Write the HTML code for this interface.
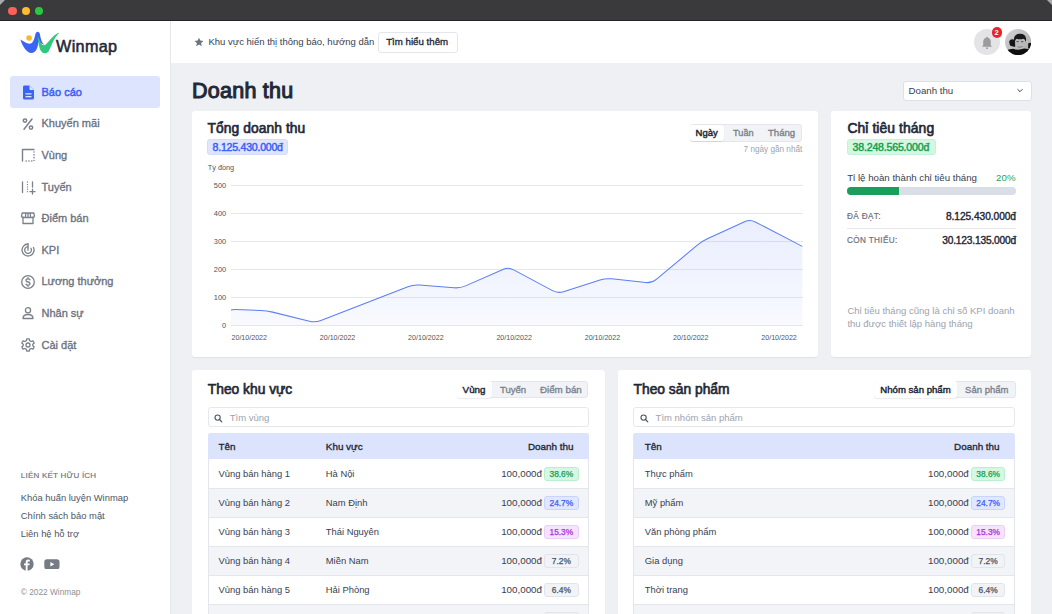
<!DOCTYPE html>
<html><head><meta charset="utf-8"><style>
html,body{margin:0;padding:0;}
body{width:1052px;height:614px;overflow:hidden;position:relative;font-family:'Liberation Sans', sans-serif;background:#fff;}
</style></head><body>
<div style="position:absolute;left:0px;top:0px;width:1052px;height:20px;background:#3a3a3c"></div>
<div style="position:absolute;left:0px;top:20px;width:1052px;height:1px;background:#242426"></div>
<svg style="position:absolute;left:0;top:0" width="1052" height="20"><path d="M0 0 L5 0 L0 5Z" fill="#a9a9ab"/><path d="M1052 0 L1047 0 L1052 5Z" fill="#a9a9ab"/></svg>
<div style="position:absolute;left:8.35px;top:6.949999999999999px;width:8.3px;height:8.3px;background:#fe5f57;border-radius:50%"></div>
<div style="position:absolute;left:21.65px;top:6.949999999999999px;width:8.3px;height:8.3px;background:#febc2e;border-radius:50%"></div>
<div style="position:absolute;left:34.75px;top:6.949999999999999px;width:8.3px;height:8.3px;background:#28c840;border-radius:50%"></div>
<div style="position:absolute;left:0px;top:21px;width:170px;height:593px;background:#fff"></div>
<div style="position:absolute;left:170px;top:21px;width:1px;height:593px;background:#e5e7eb"></div>
<svg style="position:absolute;left:17px;top:28px" width="45" height="28" viewBox="0 0 45 28">
<path d="M3.4 11.4 C7 13.8 11 16 13.5 15.6 C16.3 15 17.5 10.5 18.3 6.5 C19 3 22.3 2.5 23 6.5 C23.8 11 25 16 28.5 17.5 L21.5 14 C20.8 20 19 24.8 14.5 25 C9.5 25 5 17 3.4 11.4Z" fill="#3d63f5"/>
<path d="M20.6 8.5 C21.5 15 22 21 24.8 24 C26.5 25.8 30 25.8 31.5 23.5 C34 19.5 36 11 42.2 4.8 C41.8 4.6 41 4.8 40.5 5.2 C36 7.8 32 13 28.8 16.5 C26.5 18.5 24 16.5 23 13Z" fill="#2ec97a"/>
<circle cx="12.1" cy="10" r="2.8" fill="#f9b72b"/>
</svg>
<div style="position:absolute;left:56.00px;top:38.09px;font-size:16.2px;line-height:16.2px;font-weight:400;color:#1f2937;letter-spacing:0.35px;white-space:nowrap;-webkit-text-stroke:0.33px #1f2937;-webkit-text-stroke:0.55px #1f2937;">Winmap</div>
<div style="position:absolute;left:10px;top:76px;width:150px;height:31.8px;background:#dde4fd;border-radius:3px"></div>
<div style="position:absolute;left:41.50px;top:86.89px;font-size:11px;line-height:11px;font-weight:400;color:#3b5ef6;letter-spacing:0px;white-space:nowrap;-webkit-text-stroke:0.33px #3b5ef6;-webkit-text-stroke:0.45px #3b5ef6;">Báo cáo</div>
<div style="position:absolute;left:41.50px;top:118.49px;font-size:11px;line-height:11px;font-weight:400;color:#6b7280;letter-spacing:0px;white-space:nowrap;-webkit-text-stroke:0.33px #6b7280;">Khuyến mãi</div>
<div style="position:absolute;left:41.50px;top:150.09px;font-size:11px;line-height:11px;font-weight:400;color:#6b7280;letter-spacing:0px;white-space:nowrap;-webkit-text-stroke:0.33px #6b7280;">Vùng</div>
<div style="position:absolute;left:41.50px;top:181.69px;font-size:11px;line-height:11px;font-weight:400;color:#6b7280;letter-spacing:0px;white-space:nowrap;-webkit-text-stroke:0.33px #6b7280;">Tuyến</div>
<div style="position:absolute;left:41.50px;top:213.29px;font-size:11px;line-height:11px;font-weight:400;color:#6b7280;letter-spacing:0px;white-space:nowrap;-webkit-text-stroke:0.33px #6b7280;">Điểm bán</div>
<div style="position:absolute;left:41.50px;top:244.89px;font-size:11px;line-height:11px;font-weight:400;color:#6b7280;letter-spacing:0px;white-space:nowrap;-webkit-text-stroke:0.33px #6b7280;">KPI</div>
<div style="position:absolute;left:41.50px;top:276.49px;font-size:11px;line-height:11px;font-weight:400;color:#6b7280;letter-spacing:0px;white-space:nowrap;-webkit-text-stroke:0.33px #6b7280;">Lương thưởng</div>
<div style="position:absolute;left:41.50px;top:308.09px;font-size:11px;line-height:11px;font-weight:400;color:#6b7280;letter-spacing:0px;white-space:nowrap;-webkit-text-stroke:0.33px #6b7280;">Nhân sự</div>
<div style="position:absolute;left:41.50px;top:339.69px;font-size:11px;line-height:11px;font-weight:400;color:#6b7280;letter-spacing:0px;white-space:nowrap;-webkit-text-stroke:0.33px #6b7280;">Cài đặt</div>
<svg style="position:absolute;left:22px;top:85px" width="13" height="15" viewBox="0 0 13 15">
<path d="M2 0.5 H7.5 L12 5 V13 Q12 14.5 10.5 14.5 H2.5 Q1 14.5 1 13 V2 Q1 0.5 2 0.5Z" fill="#3d63f5"/>
<path d="M7.5 0.5 V4 Q7.5 5 8.5 5 H12Z" fill="#dde4fd"/>
<rect x="3.5" y="8.2" width="6" height="1.3" fill="#dde4fd"/><rect x="3.5" y="11" width="6" height="1.3" fill="#dde4fd"/>
</svg>
<svg style="position:absolute;left:20px;top:116px" width="16" height="16" viewBox="0 0 16 16" fill="none" stroke="#7b808a" stroke-width="1.3" stroke-linecap="round" stroke-linejoin="round"><path d="M4 13.2 L12 3" stroke-width="1.5"/><circle cx="5" cy="4.6" r="1.7" stroke-width="1.5"/><circle cx="11" cy="11.6" r="1.7" stroke-width="1.5"/></svg>
<svg style="position:absolute;left:20px;top:147px" width="16" height="16" viewBox="0 0 16 16" fill="none" stroke="#7b808a" stroke-width="1.3" stroke-linecap="round" stroke-linejoin="round"><path d="M2.5 14 V2.5 H14" stroke-width="1.4"/><path d="M14 5 V14 H4.5" stroke-dasharray="0.1 2.7" stroke-width="1.5"/></svg>
<svg style="position:absolute;left:20px;top:179px" width="16" height="16" viewBox="0 0 16 16" fill="none" stroke="#7b808a" stroke-width="1.3" stroke-linecap="round" stroke-linejoin="round"><path d="M2.5 3 V13.5"/><path d="M7.5 3 V13.5" stroke-dasharray="0.1 2.3"/><path d="M12.5 3 V8"/><path d="M10 12.6 H15 M12.5 10.2 V15"/></svg>
<svg style="position:absolute;left:20px;top:210px" width="16" height="16" viewBox="0 0 16 16" fill="none" stroke="#7b808a" stroke-width="1.3" stroke-linecap="round" stroke-linejoin="round"><path d="M3 7 V13.5 H13 V7"/><path d="M2.2 3 H13.8 L14.5 6 Q14.5 7.5 13 7.5 H3 Q1.5 7.5 1.5 6Z M5.8 3 L5.4 7.5 M10.2 3 L10.6 7.5 M8 3 V7.5"/></svg>
<svg style="position:absolute;left:20px;top:242px" width="16" height="16" viewBox="0 0 16 16" fill="none" stroke="#7b808a" stroke-width="1.3" stroke-linecap="round" stroke-linejoin="round"><path d="M8 2 A6 6 0 1 0 13.5 5.5"/><path d="M8 4.6 A3.4 3.4 0 1 0 11 6.3"/><path d="M8 2 V8.3"/></svg>
<svg style="position:absolute;left:20px;top:274px" width="16" height="16" viewBox="0 0 16 16" fill="none" stroke="#7b808a" stroke-width="1.3" stroke-linecap="round" stroke-linejoin="round"><circle cx="8" cy="8" r="6.3"/><path d="M10 5.8 Q9.4 4.8 8 4.8 Q6 4.8 6 6.4 Q6 7.6 8 8 Q10 8.4 10 9.7 Q10 11.2 8 11.2 Q6.6 11.2 6 10.2 M8 3.6 V4.8 M8 11.2 V12.4"/></svg>
<svg style="position:absolute;left:20px;top:305px" width="16" height="16" viewBox="0 0 16 16" fill="none" stroke="#7b808a" stroke-width="1.3" stroke-linecap="round" stroke-linejoin="round"><circle cx="8" cy="5.2" r="2.6"/><path d="M3 13.5 Q3 9.5 8 9.5 Q13 9.5 13 13.5 Z"/></svg>
<svg style="position:absolute;left:20px;top:337px" width="16" height="16" viewBox="0 0 16 16" fill="none" stroke="#7b808a" stroke-width="1.3" stroke-linecap="round" stroke-linejoin="round"><circle cx="8" cy="8" r="2"/><path d="M6.8 1.8 H9.2 L9.6 3.6 L11.2 4.5 L13 3.9 L14.2 6 L12.8 7.2 V8.8 L14.2 10 L13 12.1 L11.2 11.5 L9.6 12.4 L9.2 14.2 H6.8 L6.4 12.4 L4.8 11.5 L3 12.1 L1.8 10 L3.2 8.8 V7.2 L1.8 6 L3 3.9 L4.8 4.5 L6.4 3.6Z"/></svg>
<div style="position:absolute;left:20.80px;top:471.93px;font-size:8px;line-height:8px;font-weight:400;color:#6b7280;letter-spacing:0.22px;white-space:nowrap;-webkit-text-stroke:0.15px #6b7280;">LIÊN KẾT HỮU ÍCH</div>
<div style="position:absolute;left:20.80px;top:492.84px;font-size:9.4px;line-height:9.4px;font-weight:400;color:#4b5563;letter-spacing:0px;white-space:nowrap;">Khóa huấn luyện Winmap</div>
<div style="position:absolute;left:20.80px;top:511.09px;font-size:9.4px;line-height:9.4px;font-weight:400;color:#4b5563;letter-spacing:0px;white-space:nowrap;">Chính sách bảo mật</div>
<div style="position:absolute;left:20.80px;top:529.34px;font-size:9.4px;line-height:9.4px;font-weight:400;color:#4b5563;letter-spacing:0px;white-space:nowrap;">Liên hệ hỗ trợ</div>
<svg style="position:absolute;left:20px;top:557px" width="14" height="14" viewBox="0 0 14 14"><circle cx="7" cy="7" r="6.7" fill="#777b86"/><path d="M7.6 14 V8.3 H9.4 L9.7 6.4 H7.6 V5.3 Q7.6 4.4 8.5 4.4 H9.8 V2.7 Q9 2.6 8.2 2.6 Q5.7 2.6 5.7 5.2 V6.4 H4 V8.3 H5.7 V14Z" fill="#fff"/></svg>
<svg style="position:absolute;left:43.5px;top:558.8px" width="16" height="10.5" viewBox="0 0 16 10.5"><rect x="0.3" y="0.2" width="15.2" height="10.1" rx="2.6" fill="#777b86"/><path d="M6.4 3.1 L10.3 5.25 L6.4 7.4Z" fill="#fff"/></svg>
<div style="position:absolute;left:20.80px;top:587.77px;font-size:8.3px;line-height:8.3px;font-weight:400;color:#8b909a;letter-spacing:0px;white-space:nowrap;">© 2022 Winmap</div>
<div style="position:absolute;left:171px;top:21px;width:881px;height:42px;background:#fff"></div>
<svg style="position:absolute;left:194px;top:37px" width="10" height="10" viewBox="0 0 24 24"><path d="M12 1.5 L15.1 8.6 L22.8 9.3 L17 14.4 L18.7 22 L12 18 L5.3 22 L7 14.4 L1.2 9.3 L8.9 8.6Z" fill="#6b7280"/></svg>
<div style="position:absolute;left:208.50px;top:37.46px;font-size:9.5px;line-height:9.5px;font-weight:400;color:#374151;letter-spacing:0px;white-space:nowrap;">Khu vực hiển thị thông báo, hướng dẫn</div>
<div style="position:absolute;left:378px;top:31.5px;width:77.5px;height:19.7px;background:#fff;border:1px solid #e3e6ec;border-radius:3px"></div>
<div style="position:absolute;left:386.20px;top:37.29px;font-size:9.7px;line-height:9.7px;font-weight:400;color:#1f2937;letter-spacing:0px;white-space:nowrap;-webkit-text-stroke:0.33px #1f2937;">Tìm hiểu thêm</div>
<div style="position:absolute;left:974px;top:29px;width:26px;height:26px;background:#e4e4e6;border-radius:50%"></div>
<svg style="position:absolute;left:981px;top:35.5px" width="12" height="14" viewBox="0 0 12 14"><path d="M6 0.8 Q6.9 0.8 6.9 1.7 Q9.8 2.4 9.8 6 V9.3 L11 10.8 H1 L2.2 9.3 V6 Q2.2 2.4 5.1 1.7 Q5.1 0.8 6 0.8Z" fill="#9b9b9e"/><path d="M4.8 11.5 H7.2 Q7.2 13 6 13 Q4.8 13 4.8 11.5Z" fill="#9b9b9e"/></svg>
<div style="position:absolute;left:991.6px;top:26.9px;width:10.8px;height:10.8px;background:#e5252a;border-radius:50%"></div>
<div style="position:absolute;left:994.60px;top:28.85px;font-size:7.5px;line-height:7.5px;font-weight:700;color:#fff;letter-spacing:0px;white-space:nowrap;">2</div>
<svg style="position:absolute;left:1005.3px;top:29px" width="26.2" height="26.2" viewBox="0 0 26 26"><defs><clipPath id="av"><circle cx="13" cy="13" r="13"/></clipPath><linearGradient id="ag" x1="0" y1="0" x2="1" y2="1"><stop offset="0" stop-color="#d4d4d6"/><stop offset="1" stop-color="#a8a8aa"/></linearGradient></defs>
<g clip-path="url(#av)"><rect width="26" height="26" fill="url(#ag)"/>
<path d="M4.3 12 Q5 10.2 7.5 10.3 Q10 10.5 10.3 13 L10.3 17.5 Q7 17.8 5 16.5 Q4 14.5 4.3 12Z" fill="#141414"/>
<path d="M23 14.5 Q25 13 26 14 L26 19.5 Q24 20 23 19Z" fill="#141414"/>
<path d="M10 9.5 Q10 8.8 11.5 8.8 L18.5 8.8 Q20 9 20 11 L19.8 16.5 Q19 20.5 15 20.6 Q11 20.5 10.3 16.5Z" fill="#b9b9bb"/>
<path d="M8.8 11.5 Q8.5 5 14.5 4.7 Q20.5 4.6 21 10 Q21 12 20.4 12.6 Q20 9.8 18 9.7 Q15 10.8 11.5 9.6 Q10.2 10.5 10 12.2Z" fill="#1a1a1c"/>
<path d="M11.5 12.5 H13.5 M16 12.6 H18.2" stroke="#3a3a3a" stroke-width="0.9"/>
<path d="M12.5 17.5 Q15 18.6 17.5 17.3" stroke="#7a7a7a" stroke-width="1" fill="none"/>
<path d="M0 22 Q3 19.8 8 19.6 Q13 21.6 19 19.4 Q24 19.6 26 21.5 V26 H0Z" fill="#0e0e0e"/>
</g></svg>
<div style="position:absolute;left:171px;top:63px;width:881px;height:551px;background:#eef0f4"></div>
<div style="position:absolute;left:192.00px;top:81.30px;font-size:21.5px;line-height:21.5px;font-weight:400;color:#1f2937;letter-spacing:0.25px;white-space:nowrap;-webkit-text-stroke:0.33px #1f2937;-webkit-text-stroke:1.05px #1f2937;">Doanh thu</div>
<div style="position:absolute;left:902.5px;top:80.5px;width:129px;height:20.7px;background:#fff;border:1px solid #dde0e7;border-radius:3px;box-sizing:border-box"></div>
<div style="position:absolute;left:908.50px;top:86.39px;font-size:9.7px;line-height:9.7px;font-weight:400;color:#374151;letter-spacing:0px;white-space:nowrap;">Doanh thu</div>
<svg style="position:absolute;left:1016px;top:88px" width="8" height="6" viewBox="0 0 8 6"><path d="M1.8 1.5 L4 3.7 L6.2 1.5" stroke="#374151" stroke-width="1" fill="none" stroke-linecap="round"/></svg>
<div style="position:absolute;left:192px;top:110.5px;width:626px;height:246.5px;background:#fff;border-radius:3px;box-shadow:0 1px 1px rgba(0,0,0,0.06)"></div>
<div style="position:absolute;left:207.60px;top:122.42px;font-size:13.8px;line-height:13.8px;font-weight:400;color:#1f2937;letter-spacing:0.08px;white-space:nowrap;-webkit-text-stroke:0.33px #1f2937;-webkit-text-stroke:0.65px #1f2937;">Tổng doanh thu</div>
<div style="position:absolute;left:207.2px;top:139.3px;width:81.3px;height:16.2px;background:#dfe5fd;border-radius:3px;box-sizing:border-box;border:1px solid #d3dcfc"></div>
<div style="position:absolute;left:212.60px;top:142.23px;font-size:10.6px;line-height:10.6px;font-weight:400;color:#3b5ef6;letter-spacing:-0.25px;white-space:nowrap;-webkit-text-stroke:0.33px #3b5ef6;-webkit-text-stroke:0.45px #3b5ef6;">8.125.430.000đ</div>
<div style="position:absolute;left:207.80px;top:164.42px;font-size:7.3px;line-height:7.3px;font-weight:400;color:#4b5563;letter-spacing:0px;white-space:nowrap;">Tỷ đồng</div>
<div style="position:absolute;left:689.6px;top:124px;width:112.79999999999995px;height:17.5px;background:#f1f3f6;border:1px solid #e3e6ec;border-radius:3px;box-sizing:border-box"></div>
<div style="position:absolute;left:690.1px;top:124.5px;width:34.19999999999993px;height:16.5px;background:#fff;border-radius:3px;box-shadow:0 1px 1px rgba(0,0,0,0.08)"></div>
<div style="position:absolute;left:695.60px;top:128.26px;font-size:9.5px;line-height:9.5px;font-weight:400;color:#1f2937;letter-spacing:0px;white-space:nowrap;-webkit-text-stroke:0.33px #1f2937;-webkit-text-stroke:0.45px #1f2937;">Ngày</div>
<div style="position:absolute;left:733.00px;top:128.51px;font-size:9.2px;line-height:9.2px;font-weight:400;color:#7c818b;letter-spacing:0px;white-space:nowrap;-webkit-text-stroke:0.33px #7c818b;">Tuần</div>
<div style="position:absolute;left:768.00px;top:128.17px;font-size:9.6px;line-height:9.6px;font-weight:400;color:#7c818b;letter-spacing:0px;white-space:nowrap;-webkit-text-stroke:0.33px #7c818b;">Tháng</div>
<div style="position:absolute;right:249.70px;top:145.86px;font-size:8.2px;line-height:8.2px;font-weight:400;color:#9ca3af;letter-spacing:0px;white-space:nowrap;">7 ngày gần nhất</div>
<div style="position:absolute;left:231px;top:184.6px;width:571.5px;height:1px;background:#e6e8ef"></div>
<div style="position:absolute;right:825.80px;top:181.54px;font-size:7.4px;line-height:7.4px;font-weight:400;color:#4b5563;letter-spacing:0px;white-space:nowrap;">500</div>
<div style="position:absolute;left:231px;top:212.7px;width:571.5px;height:1px;background:#e6e8ef"></div>
<div style="position:absolute;right:825.80px;top:209.64px;font-size:7.4px;line-height:7.4px;font-weight:400;color:#4b5563;letter-spacing:0px;white-space:nowrap;">400</div>
<div style="position:absolute;left:231px;top:240.8px;width:571.5px;height:1px;background:#e6e8ef"></div>
<div style="position:absolute;right:825.80px;top:237.74px;font-size:7.4px;line-height:7.4px;font-weight:400;color:#4b5563;letter-spacing:0px;white-space:nowrap;">300</div>
<div style="position:absolute;left:231px;top:268.9px;width:571.5px;height:1px;background:#e6e8ef"></div>
<div style="position:absolute;right:825.80px;top:265.84px;font-size:7.4px;line-height:7.4px;font-weight:400;color:#4b5563;letter-spacing:0px;white-space:nowrap;">200</div>
<div style="position:absolute;left:231px;top:296.9px;width:571.5px;height:1px;background:#e6e8ef"></div>
<div style="position:absolute;right:825.80px;top:293.84px;font-size:7.4px;line-height:7.4px;font-weight:400;color:#4b5563;letter-spacing:0px;white-space:nowrap;">100</div>
<div style="position:absolute;left:231px;top:325.0px;width:571.5px;height:1px;background:#e6e8ef"></div>
<div style="position:absolute;right:825.80px;top:321.94px;font-size:7.4px;line-height:7.4px;font-weight:400;color:#4b5563;letter-spacing:0px;white-space:nowrap;">0</div>
<div style="position:absolute;left:231.50px;top:334.79px;font-size:7.1px;line-height:7.1px;font-weight:400;color:#4b5563;letter-spacing:0px;white-space:nowrap;">20/10/2022</div>
<div style="position:absolute;left:319.80px;top:334.79px;font-size:7.1px;line-height:7.1px;font-weight:400;color:#4b5563;letter-spacing:0px;white-space:nowrap;">20/10/2022</div>
<div style="position:absolute;left:408.10px;top:334.79px;font-size:7.1px;line-height:7.1px;font-weight:400;color:#4b5563;letter-spacing:0px;white-space:nowrap;">20/10/2022</div>
<div style="position:absolute;left:496.40px;top:334.79px;font-size:7.1px;line-height:7.1px;font-weight:400;color:#4b5563;letter-spacing:0px;white-space:nowrap;">20/10/2022</div>
<div style="position:absolute;left:584.70px;top:334.79px;font-size:7.1px;line-height:7.1px;font-weight:400;color:#4b5563;letter-spacing:0px;white-space:nowrap;">20/10/2022</div>
<div style="position:absolute;left:673.00px;top:334.79px;font-size:7.1px;line-height:7.1px;font-weight:400;color:#4b5563;letter-spacing:0px;white-space:nowrap;">20/10/2022</div>
<div style="position:absolute;left:761.30px;top:334.79px;font-size:7.1px;line-height:7.1px;font-weight:400;color:#4b5563;letter-spacing:0px;white-space:nowrap;">20/10/2022</div>
<svg style="position:absolute;left:0;top:0" width="1052" height="614"><defs><linearGradient id="fg" x1="0" y1="0" x2="0" y2="1"><stop offset="0" stop-color="#5b7cfa" stop-opacity="0.13"/><stop offset="1" stop-color="#5b7cfa" stop-opacity="0.04"/></linearGradient></defs>
<path d="M231 310.1 L232.50 309.75 Q234 309.4 235.54 309.46 L260.80 310.46 Q266.8 310.7 272.63 312.13 L309.47 321.17 Q315.3 322.6 320.90 320.43 L407.90 286.77 Q413.5 284.6 419.48 285.08 L454.02 287.82 Q460 288.3 465.49 285.88 L502.91 269.42 Q508.4 267.0 513.69 269.84 L552.51 290.66 Q557.8 293.5 563.52 291.67 L599.98 280.03 Q605.7 278.2 611.66 278.85 L645.74 282.55 Q651.7 283.2 656.31 279.36 L697.29 245.14 Q701.9 241.3 707.35 238.79 L744.55 221.71 Q750 219.2 755.32 221.97 L802.3 246.4 L802.3 325.5 L231 325.5Z" fill="url(#fg)"/>
<path d="M231 310.1 L232.50 309.75 Q234 309.4 235.54 309.46 L260.80 310.46 Q266.8 310.7 272.63 312.13 L309.47 321.17 Q315.3 322.6 320.90 320.43 L407.90 286.77 Q413.5 284.6 419.48 285.08 L454.02 287.82 Q460 288.3 465.49 285.88 L502.91 269.42 Q508.4 267.0 513.69 269.84 L552.51 290.66 Q557.8 293.5 563.52 291.67 L599.98 280.03 Q605.7 278.2 611.66 278.85 L645.74 282.55 Q651.7 283.2 656.31 279.36 L697.29 245.14 Q701.9 241.3 707.35 238.79 L744.55 221.71 Q750 219.2 755.32 221.97 L802.3 246.4" fill="none" stroke="#5a7ef8" stroke-width="1.05"/></svg>
<div style="position:absolute;left:831px;top:110.5px;width:200px;height:246.5px;background:#fff;border-radius:3px;box-shadow:0 1px 1px rgba(0,0,0,0.06)"></div>
<div style="position:absolute;left:847.40px;top:122.33px;font-size:13.9px;line-height:13.9px;font-weight:400;color:#1f2937;letter-spacing:0.08px;white-space:nowrap;-webkit-text-stroke:0.33px #1f2937;-webkit-text-stroke:0.65px #1f2937;">Chỉ tiêu tháng</div>
<div style="position:absolute;left:847px;top:139.3px;width:89.2px;height:16.2px;background:#d3f8e2;border-radius:3px;box-sizing:border-box;border:1px solid #c2f3d6"></div>
<div style="position:absolute;left:852.60px;top:142.23px;font-size:10.6px;line-height:10.6px;font-weight:400;color:#1b9e55;letter-spacing:-0.2px;white-space:nowrap;-webkit-text-stroke:0.33px #1b9e55;-webkit-text-stroke:0.45px #1b9e55;">38.248.565.000đ</div>
<div style="position:absolute;left:847.20px;top:172.99px;font-size:9.7px;line-height:9.7px;font-weight:400;color:#374151;letter-spacing:0px;white-space:nowrap;">Tỉ lệ hoàn thành chỉ tiêu tháng</div>
<div style="position:absolute;right:36.50px;top:172.99px;font-size:9.7px;line-height:9.7px;font-weight:400;color:#22a55a;letter-spacing:0px;white-space:nowrap;">20%</div>
<div style="position:absolute;left:847.4px;top:187px;width:168.5px;height:8px;background:#dadee7;border-radius:4px"></div>
<div style="position:absolute;left:847.4px;top:187px;width:51.2px;height:8px;background:#1a9e5c;border-radius:4px 0 0 4px"></div>
<div style="position:absolute;left:847.00px;top:213.06px;font-size:8.2px;line-height:8.2px;font-weight:400;color:#6b7280;letter-spacing:0.35px;white-space:nowrap;-webkit-text-stroke:0.2px #6b7280;">ĐÃ ĐẠT:</div>
<div style="position:absolute;right:36.00px;top:212.17px;font-size:10.2px;line-height:10.2px;font-weight:400;color:#1f2937;letter-spacing:-0.05px;white-space:nowrap;-webkit-text-stroke:0.33px #1f2937;-webkit-text-stroke:0.4px #1f2937;">8.125.430.000đ</div>
<div style="position:absolute;left:847px;top:227.5px;width:168.5px;height:1px;background:#e5e7eb"></div>
<div style="position:absolute;left:847.00px;top:236.86px;font-size:8.2px;line-height:8.2px;font-weight:400;color:#6b7280;letter-spacing:0.35px;white-space:nowrap;-webkit-text-stroke:0.2px #6b7280;">CÒN THIẾU:</div>
<div style="position:absolute;right:36.00px;top:235.57px;font-size:10.2px;line-height:10.2px;font-weight:400;color:#1f2937;letter-spacing:-0.18px;white-space:nowrap;-webkit-text-stroke:0.33px #1f2937;-webkit-text-stroke:0.4px #1f2937;">30.123.135.000đ</div>
<div style="position:absolute;left:847.40px;top:306.32px;font-size:9.55px;line-height:9.55px;font-weight:400;color:#9ca3af;letter-spacing:0px;white-space:nowrap;">Chỉ tiêu tháng cũng là chỉ số KPI doanh</div>
<div style="position:absolute;left:847.40px;top:319.22px;font-size:9.55px;line-height:9.55px;font-weight:400;color:#9ca3af;letter-spacing:0px;white-space:nowrap;">thu được thiết lập hàng tháng</div>
<div style="position:absolute;left:192px;top:370px;width:413px;height:260px;background:#fff;border-radius:3px;box-shadow:0 1px 1px rgba(0,0,0,0.06)"></div>
<div style="position:absolute;left:207.80px;top:382.82px;font-size:13.8px;line-height:13.8px;font-weight:400;color:#1f2937;letter-spacing:0px;white-space:nowrap;-webkit-text-stroke:0.33px #1f2937;-webkit-text-stroke:0.65px #1f2937;">Theo khu vực</div>
<div style="position:absolute;left:456.6px;top:380.5px;width:131.89999999999998px;height:17.899999999999977px;background:#f1f3f6;border:1px solid #e3e6ec;border-radius:3px;box-sizing:border-box"></div>
<div style="position:absolute;left:457.1px;top:381.0px;width:34.69999999999999px;height:16.899999999999977px;background:#fff;border-radius:3px;box-shadow:0 1px 1px rgba(0,0,0,0.08)"></div>
<div style="position:absolute;left:462.60px;top:385.00px;font-size:9.8px;line-height:9.8px;font-weight:400;color:#1f2937;letter-spacing:0px;white-space:nowrap;-webkit-text-stroke:0.33px #1f2937;-webkit-text-stroke:0.45px #1f2937;">Vùng</div>
<div style="position:absolute;left:499.90px;top:385.17px;font-size:9.6px;line-height:9.6px;font-weight:400;color:#7c818b;letter-spacing:0px;white-space:nowrap;-webkit-text-stroke:0.33px #7c818b;">Tuyến</div>
<div style="position:absolute;left:539.90px;top:385.00px;font-size:9.8px;line-height:9.8px;font-weight:400;color:#7c818b;letter-spacing:0px;white-space:nowrap;-webkit-text-stroke:0.33px #7c818b;">Điểm bán</div>
<div style="position:absolute;left:207.5px;top:407px;width:381.5px;height:20.4px;background:#fff;border:1px solid #e6e8ed;border-radius:3px;box-sizing:border-box"></div>
<svg style="position:absolute;left:214.0px;top:413.5px" width="9" height="9" viewBox="0 0 9 9"><circle cx="3.6" cy="3.6" r="2.6" stroke="#4b5563" stroke-width="1.1" fill="none"/><path d="M5.5 5.5 L7.8 7.8" stroke="#4b5563" stroke-width="1.2" stroke-linecap="round"/></svg>
<div style="position:absolute;left:229.80px;top:412.76px;font-size:9.5px;line-height:9.5px;font-weight:400;color:#9ca3af;letter-spacing:0px;white-space:nowrap;">Tìm vùng</div>
<div style="position:absolute;left:207.5px;top:433.3px;width:381.5px;height:200px;background:#fff;border:1px solid #e3e6ec;border-radius:3px;box-sizing:border-box"></div>
<div style="position:absolute;left:207.5px;top:433.3px;width:381.5px;height:25.7px;background:#dbe3fd;border-radius:3px 3px 0 0"></div>
<div style="position:absolute;left:218.50px;top:441.52px;font-size:9.9px;line-height:9.9px;font-weight:400;color:#1f2937;letter-spacing:0px;white-space:nowrap;-webkit-text-stroke:0.33px #1f2937;">Tên</div>
<div style="position:absolute;left:325.80px;top:441.52px;font-size:9.9px;line-height:9.9px;font-weight:400;color:#1f2937;letter-spacing:0px;white-space:nowrap;-webkit-text-stroke:0.33px #1f2937;">Khu vực</div>
<div style="position:absolute;right:478.50px;top:441.52px;font-size:9.9px;line-height:9.9px;font-weight:400;color:#1f2937;letter-spacing:0px;white-space:nowrap;-webkit-text-stroke:0.33px #1f2937;">Doanh thu</div>
<div style="position:absolute;left:208.5px;top:459px;width:379.5px;height:29px;background:#fff"></div>
<div style="position:absolute;left:208.5px;top:488px;width:379.5px;height:29px;background:#f3f4f7"></div>
<div style="position:absolute;left:208.5px;top:517px;width:379.5px;height:29px;background:#fff"></div>
<div style="position:absolute;left:208.5px;top:546px;width:379.5px;height:29px;background:#f3f4f7"></div>
<div style="position:absolute;left:208.5px;top:575px;width:379.5px;height:29px;background:#fff"></div>
<div style="position:absolute;left:208.5px;top:604px;width:379.5px;height:29px;background:#f3f4f7"></div>
<div style="position:absolute;left:208.5px;top:487.6px;width:379.5px;height:1px;background:#e4e6ec"></div>
<div style="position:absolute;left:208.5px;top:516.6px;width:379.5px;height:1px;background:#e4e6ec"></div>
<div style="position:absolute;left:208.5px;top:545.6px;width:379.5px;height:1px;background:#e4e6ec"></div>
<div style="position:absolute;left:208.5px;top:574.6px;width:379.5px;height:1px;background:#e4e6ec"></div>
<div style="position:absolute;left:208.5px;top:603.6px;width:379.5px;height:1px;background:#e4e6ec"></div>
<div style="position:absolute;left:208.5px;top:632.6px;width:379.5px;height:1px;background:#e4e6ec"></div>
<div style="position:absolute;left:218.50px;top:469.24px;font-size:9.4px;line-height:9.4px;font-weight:400;color:#374151;letter-spacing:0px;white-space:nowrap;">Vùng bán hàng 1</div>
<div style="position:absolute;left:325.80px;top:469.24px;font-size:9.4px;line-height:9.4px;font-weight:400;color:#374151;letter-spacing:0px;white-space:nowrap;">Hà Nội</div>
<div style="position:absolute;right:510.00px;top:469.00px;font-size:9.8px;line-height:9.8px;font-weight:400;color:#374151;letter-spacing:0px;white-space:nowrap;">100,000đ</div>
<div style="position:absolute;left:544px;top:467.4px;width:34.7px;height:13.2px;background:#d5f8e3;border:1px solid #b9efcf;border-radius:3px;box-sizing:border-box"></div>
<div style="position:absolute;left:544px;top:468.2px;width:34.7px;height:13.2px;line-height:13.2px;text-align:center;font-size:8.4px;font-weight:400;-webkit-text-stroke:0.25px #1b9e55;color:#1b9e55">38.6%</div>
<div style="position:absolute;left:218.50px;top:498.24px;font-size:9.4px;line-height:9.4px;font-weight:400;color:#374151;letter-spacing:0px;white-space:nowrap;">Vùng bán hàng 2</div>
<div style="position:absolute;left:325.80px;top:498.24px;font-size:9.4px;line-height:9.4px;font-weight:400;color:#374151;letter-spacing:0px;white-space:nowrap;">Nam Định</div>
<div style="position:absolute;right:510.00px;top:498.00px;font-size:9.8px;line-height:9.8px;font-weight:400;color:#374151;letter-spacing:0px;white-space:nowrap;">100,000đ</div>
<div style="position:absolute;left:544px;top:496.4px;width:34.7px;height:13.2px;background:#e0e7fe;border:1px solid #c9d4fc;border-radius:3px;box-sizing:border-box"></div>
<div style="position:absolute;left:544px;top:497.2px;width:34.7px;height:13.2px;line-height:13.2px;text-align:center;font-size:8.4px;font-weight:400;-webkit-text-stroke:0.25px #3b5ef6;color:#3b5ef6">24.7%</div>
<div style="position:absolute;left:218.50px;top:527.24px;font-size:9.4px;line-height:9.4px;font-weight:400;color:#374151;letter-spacing:0px;white-space:nowrap;">Vùng bán hàng 3</div>
<div style="position:absolute;left:325.80px;top:527.24px;font-size:9.4px;line-height:9.4px;font-weight:400;color:#374151;letter-spacing:0px;white-space:nowrap;">Thái Nguyên</div>
<div style="position:absolute;right:510.00px;top:527.00px;font-size:9.8px;line-height:9.8px;font-weight:400;color:#374151;letter-spacing:0px;white-space:nowrap;">100,000đ</div>
<div style="position:absolute;left:544px;top:525.4px;width:34.7px;height:13.2px;background:#f6e3fd;border:1px solid #ebcdfa;border-radius:3px;box-sizing:border-box"></div>
<div style="position:absolute;left:544px;top:526.2px;width:34.7px;height:13.2px;line-height:13.2px;text-align:center;font-size:8.4px;font-weight:400;-webkit-text-stroke:0.25px #a932d6;color:#a932d6">15.3%</div>
<div style="position:absolute;left:218.50px;top:556.24px;font-size:9.4px;line-height:9.4px;font-weight:400;color:#374151;letter-spacing:0px;white-space:nowrap;">Vùng bán hàng 4</div>
<div style="position:absolute;left:325.80px;top:556.24px;font-size:9.4px;line-height:9.4px;font-weight:400;color:#374151;letter-spacing:0px;white-space:nowrap;">Miền Nam</div>
<div style="position:absolute;right:510.00px;top:556.00px;font-size:9.8px;line-height:9.8px;font-weight:400;color:#374151;letter-spacing:0px;white-space:nowrap;">100,000đ</div>
<div style="position:absolute;left:544px;top:554.4px;width:34.7px;height:13.2px;background:#f1f3f6;border:1px solid #e1e4ea;border-radius:3px;box-sizing:border-box"></div>
<div style="position:absolute;left:544px;top:555.2px;width:34.7px;height:13.2px;line-height:13.2px;text-align:center;font-size:8.4px;font-weight:400;-webkit-text-stroke:0.25px #4b5563;color:#4b5563">7.2%</div>
<div style="position:absolute;left:218.50px;top:585.24px;font-size:9.4px;line-height:9.4px;font-weight:400;color:#374151;letter-spacing:0px;white-space:nowrap;">Vùng bán hàng 5</div>
<div style="position:absolute;left:325.80px;top:585.24px;font-size:9.4px;line-height:9.4px;font-weight:400;color:#374151;letter-spacing:0px;white-space:nowrap;">Hải Phòng</div>
<div style="position:absolute;right:510.00px;top:585.00px;font-size:9.8px;line-height:9.8px;font-weight:400;color:#374151;letter-spacing:0px;white-space:nowrap;">100,000đ</div>
<div style="position:absolute;left:544px;top:583.4px;width:34.7px;height:13.2px;background:#f1f3f6;border:1px solid #e1e4ea;border-radius:3px;box-sizing:border-box"></div>
<div style="position:absolute;left:544px;top:584.2px;width:34.7px;height:13.2px;line-height:13.2px;text-align:center;font-size:8.4px;font-weight:400;-webkit-text-stroke:0.25px #4b5563;color:#4b5563">6.4%</div>
<div style="position:absolute;left:218.50px;top:614.24px;font-size:9.4px;line-height:9.4px;font-weight:400;color:#374151;letter-spacing:0px;white-space:nowrap;"></div>
<div style="position:absolute;left:325.80px;top:614.24px;font-size:9.4px;line-height:9.4px;font-weight:400;color:#374151;letter-spacing:0px;white-space:nowrap;"></div>
<div style="position:absolute;right:510.00px;top:614.00px;font-size:9.8px;line-height:9.8px;font-weight:400;color:#374151;letter-spacing:0px;white-space:nowrap;">100,000đ</div>
<div style="position:absolute;left:544px;top:612.4px;width:34.7px;height:13.2px;background:#f1f3f6;border:1px solid #e1e4ea;border-radius:3px;box-sizing:border-box"></div>
<div style="position:absolute;left:544px;top:613.2px;width:34.7px;height:13.2px;line-height:13.2px;text-align:center;font-size:8.4px;font-weight:400;-webkit-text-stroke:0.25px #4b5563;color:#4b5563">5.1%</div>
<div style="position:absolute;left:617.8px;top:370px;width:413.5px;height:260px;background:#fff;border-radius:3px;box-shadow:0 1px 1px rgba(0,0,0,0.06)"></div>
<div style="position:absolute;left:633.60px;top:382.82px;font-size:13.8px;line-height:13.8px;font-weight:400;color:#1f2937;letter-spacing:0px;white-space:nowrap;-webkit-text-stroke:0.33px #1f2937;-webkit-text-stroke:0.65px #1f2937;">Theo sản phẩm</div>
<div style="position:absolute;left:873.9px;top:380.7px;width:141.70000000000005px;height:17.69999999999999px;background:#f1f3f6;border:1px solid #e3e6ec;border-radius:3px;box-sizing:border-box"></div>
<div style="position:absolute;left:874.4px;top:381.2px;width:82.70000000000005px;height:16.69999999999999px;background:#fff;border-radius:3px;box-shadow:0 1px 1px rgba(0,0,0,0.08)"></div>
<div style="position:absolute;left:880.30px;top:385.07px;font-size:9.6px;line-height:9.6px;font-weight:400;color:#1f2937;letter-spacing:0px;white-space:nowrap;-webkit-text-stroke:0.33px #1f2937;-webkit-text-stroke:0.45px #1f2937;">Nhóm sản phẩm</div>
<div style="position:absolute;left:965.10px;top:385.16px;font-size:9.5px;line-height:9.5px;font-weight:400;color:#7c818b;letter-spacing:0px;white-space:nowrap;-webkit-text-stroke:0.33px #7c818b;">Sản phẩm</div>
<div style="position:absolute;left:633.3px;top:407px;width:382.0px;height:20.4px;background:#fff;border:1px solid #e6e8ed;border-radius:3px;box-sizing:border-box"></div>
<svg style="position:absolute;left:639.8px;top:413.5px" width="9" height="9" viewBox="0 0 9 9"><circle cx="3.6" cy="3.6" r="2.6" stroke="#4b5563" stroke-width="1.1" fill="none"/><path d="M5.5 5.5 L7.8 7.8" stroke="#4b5563" stroke-width="1.2" stroke-linecap="round"/></svg>
<div style="position:absolute;left:655.60px;top:412.76px;font-size:9.5px;line-height:9.5px;font-weight:400;color:#9ca3af;letter-spacing:0px;white-space:nowrap;">Tìm nhóm sản phẩm</div>
<div style="position:absolute;left:633.3px;top:433.3px;width:382.0px;height:200px;background:#fff;border:1px solid #e3e6ec;border-radius:3px;box-sizing:border-box"></div>
<div style="position:absolute;left:633.3px;top:433.3px;width:382.0px;height:25.7px;background:#dbe3fd;border-radius:3px 3px 0 0"></div>
<div style="position:absolute;left:644.80px;top:441.52px;font-size:9.9px;line-height:9.9px;font-weight:400;color:#1f2937;letter-spacing:0px;white-space:nowrap;-webkit-text-stroke:0.33px #1f2937;">Tên</div>
<div style="position:absolute;right:52.40px;top:441.52px;font-size:9.9px;line-height:9.9px;font-weight:400;color:#1f2937;letter-spacing:0px;white-space:nowrap;-webkit-text-stroke:0.33px #1f2937;">Doanh thu</div>
<div style="position:absolute;left:634.3px;top:459px;width:380.0px;height:29px;background:#fff"></div>
<div style="position:absolute;left:634.3px;top:488px;width:380.0px;height:29px;background:#f3f4f7"></div>
<div style="position:absolute;left:634.3px;top:517px;width:380.0px;height:29px;background:#fff"></div>
<div style="position:absolute;left:634.3px;top:546px;width:380.0px;height:29px;background:#f3f4f7"></div>
<div style="position:absolute;left:634.3px;top:575px;width:380.0px;height:29px;background:#fff"></div>
<div style="position:absolute;left:634.3px;top:604px;width:380.0px;height:29px;background:#f3f4f7"></div>
<div style="position:absolute;left:634.3px;top:487.6px;width:380.0px;height:1px;background:#e4e6ec"></div>
<div style="position:absolute;left:634.3px;top:516.6px;width:380.0px;height:1px;background:#e4e6ec"></div>
<div style="position:absolute;left:634.3px;top:545.6px;width:380.0px;height:1px;background:#e4e6ec"></div>
<div style="position:absolute;left:634.3px;top:574.6px;width:380.0px;height:1px;background:#e4e6ec"></div>
<div style="position:absolute;left:634.3px;top:603.6px;width:380.0px;height:1px;background:#e4e6ec"></div>
<div style="position:absolute;left:634.3px;top:632.6px;width:380.0px;height:1px;background:#e4e6ec"></div>
<div style="position:absolute;left:644.80px;top:469.24px;font-size:9.4px;line-height:9.4px;font-weight:400;color:#374151;letter-spacing:0px;white-space:nowrap;">Thực phẩm</div>
<div style="position:absolute;right:83.20px;top:469.00px;font-size:9.8px;line-height:9.8px;font-weight:400;color:#374151;letter-spacing:0px;white-space:nowrap;">100,000đ</div>
<div style="position:absolute;left:970.8px;top:467.4px;width:34.7px;height:13.2px;background:#d5f8e3;border:1px solid #b9efcf;border-radius:3px;box-sizing:border-box"></div>
<div style="position:absolute;left:970.8px;top:468.2px;width:34.7px;height:13.2px;line-height:13.2px;text-align:center;font-size:8.4px;font-weight:400;-webkit-text-stroke:0.25px #1b9e55;color:#1b9e55">38.6%</div>
<div style="position:absolute;left:644.80px;top:498.24px;font-size:9.4px;line-height:9.4px;font-weight:400;color:#374151;letter-spacing:0px;white-space:nowrap;">Mỹ phẩm</div>
<div style="position:absolute;right:83.20px;top:498.00px;font-size:9.8px;line-height:9.8px;font-weight:400;color:#374151;letter-spacing:0px;white-space:nowrap;">100,000đ</div>
<div style="position:absolute;left:970.8px;top:496.4px;width:34.7px;height:13.2px;background:#e0e7fe;border:1px solid #c9d4fc;border-radius:3px;box-sizing:border-box"></div>
<div style="position:absolute;left:970.8px;top:497.2px;width:34.7px;height:13.2px;line-height:13.2px;text-align:center;font-size:8.4px;font-weight:400;-webkit-text-stroke:0.25px #3b5ef6;color:#3b5ef6">24.7%</div>
<div style="position:absolute;left:644.80px;top:527.24px;font-size:9.4px;line-height:9.4px;font-weight:400;color:#374151;letter-spacing:0px;white-space:nowrap;">Văn phòng phẩm</div>
<div style="position:absolute;right:83.20px;top:527.00px;font-size:9.8px;line-height:9.8px;font-weight:400;color:#374151;letter-spacing:0px;white-space:nowrap;">100,000đ</div>
<div style="position:absolute;left:970.8px;top:525.4px;width:34.7px;height:13.2px;background:#f6e3fd;border:1px solid #ebcdfa;border-radius:3px;box-sizing:border-box"></div>
<div style="position:absolute;left:970.8px;top:526.2px;width:34.7px;height:13.2px;line-height:13.2px;text-align:center;font-size:8.4px;font-weight:400;-webkit-text-stroke:0.25px #a932d6;color:#a932d6">15.3%</div>
<div style="position:absolute;left:644.80px;top:556.24px;font-size:9.4px;line-height:9.4px;font-weight:400;color:#374151;letter-spacing:0px;white-space:nowrap;">Gia dụng</div>
<div style="position:absolute;right:83.20px;top:556.00px;font-size:9.8px;line-height:9.8px;font-weight:400;color:#374151;letter-spacing:0px;white-space:nowrap;">100,000đ</div>
<div style="position:absolute;left:970.8px;top:554.4px;width:34.7px;height:13.2px;background:#f1f3f6;border:1px solid #e1e4ea;border-radius:3px;box-sizing:border-box"></div>
<div style="position:absolute;left:970.8px;top:555.2px;width:34.7px;height:13.2px;line-height:13.2px;text-align:center;font-size:8.4px;font-weight:400;-webkit-text-stroke:0.25px #4b5563;color:#4b5563">7.2%</div>
<div style="position:absolute;left:644.80px;top:585.24px;font-size:9.4px;line-height:9.4px;font-weight:400;color:#374151;letter-spacing:0px;white-space:nowrap;">Thời trang</div>
<div style="position:absolute;right:83.20px;top:585.00px;font-size:9.8px;line-height:9.8px;font-weight:400;color:#374151;letter-spacing:0px;white-space:nowrap;">100,000đ</div>
<div style="position:absolute;left:970.8px;top:583.4px;width:34.7px;height:13.2px;background:#f1f3f6;border:1px solid #e1e4ea;border-radius:3px;box-sizing:border-box"></div>
<div style="position:absolute;left:970.8px;top:584.2px;width:34.7px;height:13.2px;line-height:13.2px;text-align:center;font-size:8.4px;font-weight:400;-webkit-text-stroke:0.25px #4b5563;color:#4b5563">6.4%</div>
<div style="position:absolute;left:644.80px;top:614.24px;font-size:9.4px;line-height:9.4px;font-weight:400;color:#374151;letter-spacing:0px;white-space:nowrap;"></div>
<div style="position:absolute;right:83.20px;top:614.00px;font-size:9.8px;line-height:9.8px;font-weight:400;color:#374151;letter-spacing:0px;white-space:nowrap;">100,000đ</div>
<div style="position:absolute;left:970.8px;top:612.4px;width:34.7px;height:13.2px;background:#f1f3f6;border:1px solid #e1e4ea;border-radius:3px;box-sizing:border-box"></div>
<div style="position:absolute;left:970.8px;top:613.2px;width:34.7px;height:13.2px;line-height:13.2px;text-align:center;font-size:8.4px;font-weight:400;-webkit-text-stroke:0.25px #4b5563;color:#4b5563">5.1%</div>
</body></html>
